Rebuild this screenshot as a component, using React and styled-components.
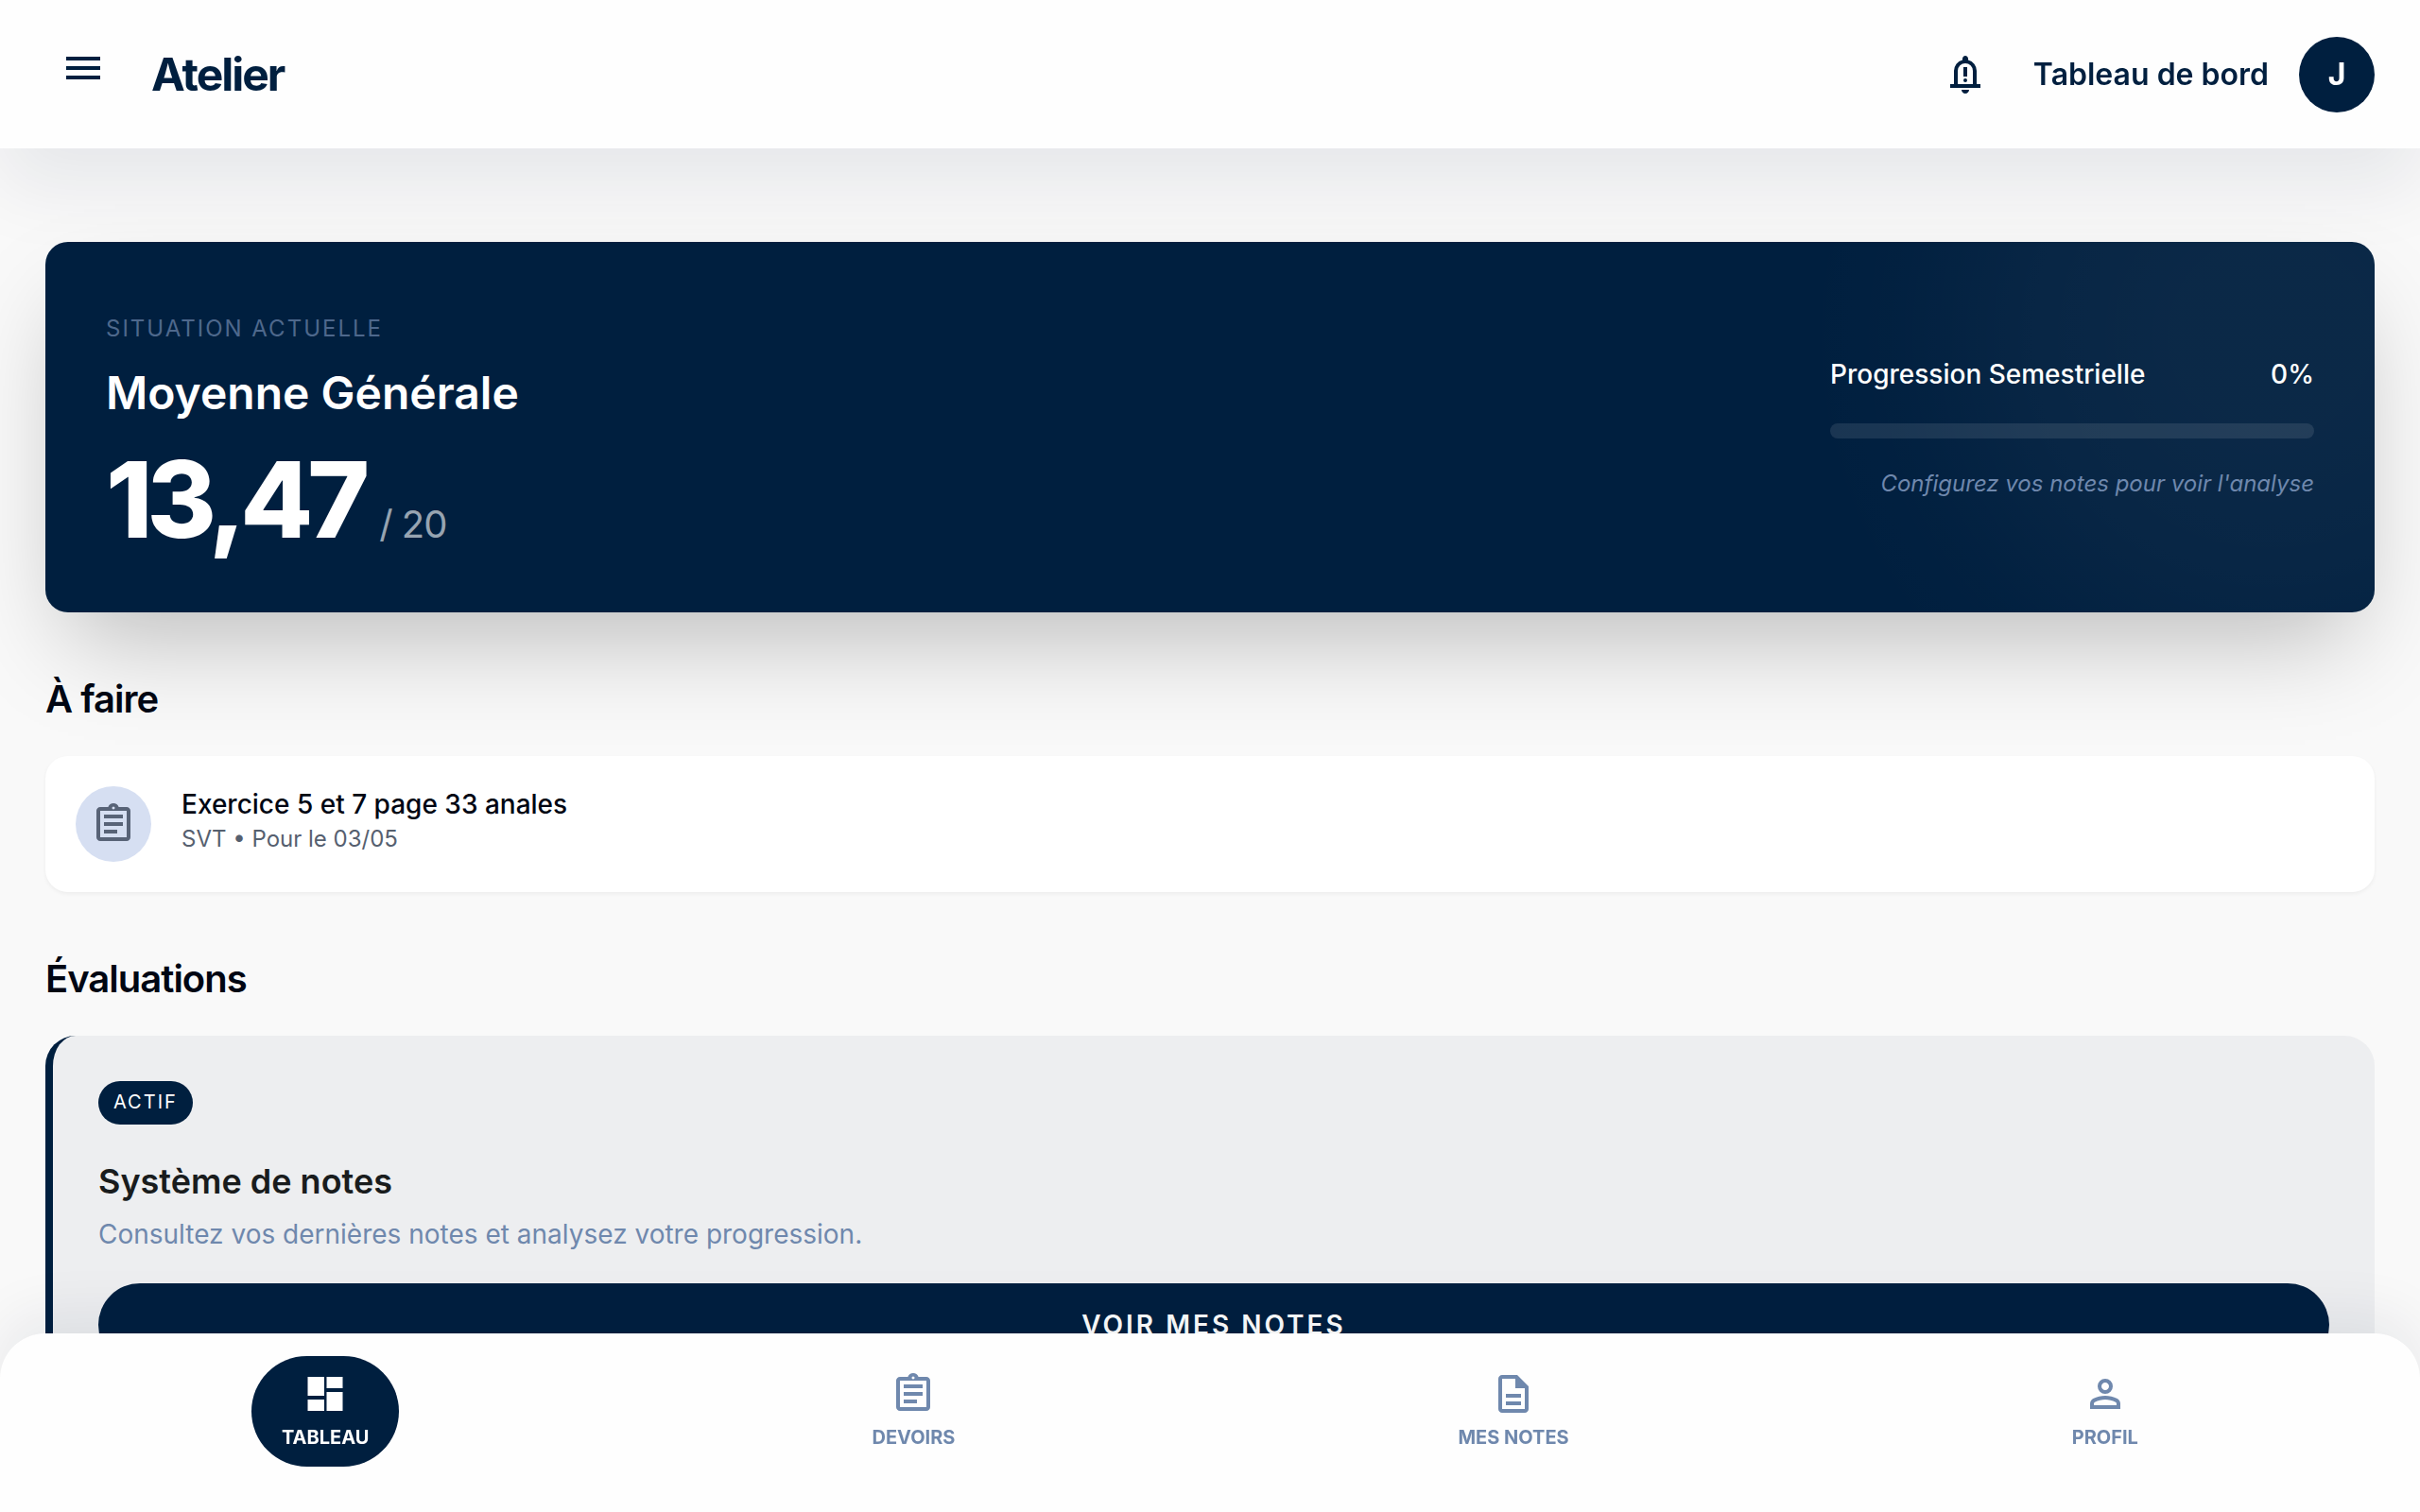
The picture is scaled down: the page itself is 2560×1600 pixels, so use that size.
import React from "react";
import styled, { createGlobalStyle } from "styled-components";

const NAVY = "#001f3f";
const STEEL = "#6f88ad";

const GlobalStyle = createGlobalStyle`
  * {
    box-sizing: border-box;
  }

  body {
    margin: 0;
    background: #f9f9f9;
    color: #191c1d;
    font-family: Inter, "Liberation Sans", sans-serif;
  }

  h1, h2, h3, p {
    margin: 0;
  }

  button {
    border: 0;
    font-family: inherit;
    cursor: pointer;
  }
`;

const ICONS = {
    menu: "M120-240v-80h720v80H120Zm0-200v-80h720v80H120Zm0-200v-80h720v80H120Z",
    bell: "M160-200v-80h80v-280q0-83 50-147.5T420-792v-28q0-25 17.5-42.5T480-880q25 0 42.5 17.5T540-820v28q80 20 130 84.5T720-560v280h80v80H160ZM480-80q-33 0-56.5-23.5T400-160h160q0 33-23.5 56.5T480-80ZM320-280h320v-280q0-66-47-113t-113-47q-66 0-113 47t-47 113v280ZM440-640h80v200h-80v-200ZM480-320a40 40 0 1 1 0-80a40 40 0 1 1 0 80Z",
    assignment: "M200-120q-33 0-56.5-23.5T120-200v-560q0-33 23.5-56.5T200-840h168q13-36 43.5-58t68.5-22q38 0 68.5 22t43.5 58h168q33 0 56.5 23.5T840-760v560q0 33-23.5 56.5T760-120H200Zm0-80h560v-560H200v560Zm80-80h280v-80H280v80Zm0-160h400v-80H280v80Zm0-160h400v-80H280v80Zm221.5-198.5Q510-807 510-820t-8.5-21.5Q493-850 480-850t-21.5 8.5Q450-833 450-820t8.5 21.5Q467-790 480-790t21.5-8.5Z",
    dashboard: "M510-600v-240h340v240H510ZM110-440v-400h350v400H110Zm400 320v-400h340v400H510Zm-400 0v-240h350v240H110Z",
    description: "M320-240h320v-80H320v80Zm0-160h320v-80H320v80ZM240-80q-33 0-56.5-23.5T160-160v-640q0-33 23.5-56.5T240-880h320l240 240v480q0 33-23.5 56.5T720-80H240Zm280-520v-200H240v640h480v-440H520Z",
    person: "M480-480q-66 0-113-47t-47-113q0-66 47-113t113-47q66 0 113 47t47 113q0 66-47 113t-113 47ZM160-160v-112q0-34 17.5-62.5T224-378q62-31 126-46.5T480-440q66 0 130 15.5T736-378q29 15 46.5 43.5T800-272v112H160Zm80-80h480v-32q0-11-5.5-20T700-306q-54-27-109-40.5T480-360q-56 0-111 13.5T260-306q-9 5-14.5 14t-5.5 20v32Zm240-320q33 0 56.5-23.5T560-640q0-33-23.5-56.5T480-720q-33 0-56.5 23.5T400-640q0 33 23.5 56.5T480-560Z",
};

const Svg = styled.svg`
  display: block;
  flex: none;
  width: 48px;
  height: 48px;
  fill: currentColor;
`;

const Icon = ({ name }) => (
    <Svg viewBox="0 -960 960 960" aria-hidden="true">
        <path fillRule="nonzero" d={ICONS[name]} />
    </Svg>
);

const TopBar = styled.header`
  position: fixed;
  inset: 0 0 auto;
  z-index: 10;
  display: flex;
  align-items: center;
  justify-content: space-between;
  padding: 32px 48px;
  background: #fefefe;
  box-shadow: 0 40px 80px rgba(0, 31, 63, 0.08);
  color: ${NAVY};
`;

const TopGroup = styled.div`
  display: flex;
  align-items: center;
  gap: 32px;
`;

const MenuButton = styled.button`
  padding: 16px 16px 29px;
  background: none;
  color: inherit;
`;

const BellButton = styled.button`
  margin-right: 16px;
  padding: 0;
  background: none;
  color: inherit;
`;

const Brand = styled.h1`
  font-size: 48px;
  line-height: 64px;
  font-weight: 700;
  letter-spacing: -2px;
`;

const PageName = styled.span`
  font-size: 32px;
  line-height: 48px;
  font-weight: 600;
`;

const Avatar = styled.div`
  display: flex;
  align-items: center;
  justify-content: center;
  width: 80px;
  height: 80px;
  border-radius: 50%;
  background: ${NAVY};
  color: #fff;
  font-size: 32px;
  line-height: 48px;
  font-weight: 700;
`;

const Main = styled.main`
  display: flex;
  flex-direction: column;
  gap: 64px;
  padding: 256px 48px 96px;
`;

const Hero = styled.section`
  display: flex;
  align-items: center;
  justify-content: space-between;
  padding: 64px;
  border-radius: 24px;
  background:
    radial-gradient(circle 500px at calc(100% - 110px) 100px, rgba(255, 255, 255, 0.045) 20%, rgba(255, 255, 255, 0.03) 50%, rgba(255, 255, 255, 0.008) 80%, transparent),
    ${NAVY};
  box-shadow: 0 50px 100px -24px rgba(0, 0, 0, 0.25);
  color: #fff;
`;

const Eyebrow = styled.p`
  padding: 10px 0 18px;
  color: ${STEEL};
  font-size: 24px;
  line-height: 36px;
  letter-spacing: 2px;
  opacity: 0.7;
`;

const HeroTitle = styled.h2`
  font-size: 48px;
  line-height: 64px;
  font-weight: 600;
`;

const Score = styled.p`
  display: flex;
  align-items: baseline;
  gap: 16px;
  margin-top: 24px;
  font-size: 112px;
  line-height: 112px;
  font-weight: 800;
  letter-spacing: -6px;
`;

const ScoreMax = styled.span`
  color: rgba(255, 255, 255, 0.6);
  font-size: 40px;
  line-height: 48px;
  font-weight: 400;
  letter-spacing: -1px;
`;

const Progress = styled.div`
  width: 512px;
`;

const ProgressHead = styled.div`
  display: flex;
  justify-content: space-between;
  font-size: 28px;
  line-height: 40px;
  font-weight: 500;
`;

const ProgressTrack = styled.div`
  height: 16px;
  margin: 32px 0;
  overflow: hidden;
  border-radius: 8px;
  background: rgba(255, 255, 255, 0.1);
`;

const ProgressFill = styled.div`
  height: 100%;
  background: #fff;
`;

const ProgressNote = styled.p`
  color: ${STEEL};
  font-size: 24px;
  line-height: 32px;
  font-style: italic;
  text-align: right;
`;

const Section = styled.section`
  display: flex;
  flex-direction: column;
  gap: 32px;
`;

const SectionTitle = styled.h2`
  color: #000613;
  font-size: 40px;
  line-height: 56px;
  font-weight: 600;
  letter-spacing: -1px;
`;

const Task = styled.article`
  display: flex;
  gap: 32px;
  padding: 32px;
  border-radius: 24px;
  background: #fff;
  box-shadow: 0 2px 4px rgba(0, 0, 0, 0.05);
`;

const TaskIcon = styled.div`
  display: flex;
  align-items: center;
  justify-content: center;
  width: 80px;
  height: 80px;
  border-radius: 50%;
  background: #d6dff2;
  color: #586377;
`;

const TaskTitle = styled.h3`
  color: #000613;
  font-size: 28px;
  line-height: 38px;
  font-weight: 500;
`;

const TaskMeta = styled.p`
  color: #56606f;
  font-size: 24px;
  line-height: 36px;
`;

const Evaluation = styled.article`
  padding: 48px;
  border-left: 8px solid ${NAVY};
  border-radius: 32px;
  background: #edeef0;
`;

const Badge = styled.span`
  display: block;
  width: fit-content;
  padding: 8px 16px 10px;
  border-radius: 24px;
  background: ${NAVY};
  color: #fff;
  font-size: 20px;
  line-height: 28px;
  letter-spacing: 2px;
`;

const EvaluationTitle = styled.h3`
  margin-top: 32px;
  font-size: 36px;
  line-height: 56px;
  font-weight: 600;
`;

const EvaluationText = styled.p`
  margin-top: 8px;
  color: ${STEEL};
  font-size: 28px;
  line-height: 40px;
`;

const WideButton = styled.button`
  display: block;
  width: 100%;
  margin-top: 32px;
  padding: 24px;
  border-radius: 44px;
  background: ${NAVY};
  color: #fff;
  font-size: 28px;
  line-height: 40px;
  font-weight: 600;
  letter-spacing: 3px;
`;

const BottomNav = styled.nav`
  position: fixed;
  inset: auto 0 0;
  z-index: 10;
  display: flex;
  justify-content: space-around;
  padding: 24px 32px 48px;
  border-radius: 48px 48px 0 0;
  background: #fefefe;
  box-shadow: 0 -20px 60px rgba(0, 31, 63, 0.07);
`;

const NavItem = styled.a`
  display: flex;
  flex-direction: column;
  align-items: center;
  gap: 8px;
  padding: 16px 32px;
  border-radius: 64px;
  background: ${({ $active }) => ($active ? NAVY : "transparent")};
  color: ${({ $active }) => ($active ? "#fff" : STEEL)};
  font-size: 20px;
  line-height: 29px;
  font-weight: 700;
  text-decoration: none;
`;

const NAV = [
    { icon: "dashboard", label: "TABLEAU", href: "#tableau" },
    { icon: "assignment", label: "DEVOIRS", href: "#devoirs" },
    { icon: "description", label: "MES NOTES", href: "#notes" },
    { icon: "person", label: "PROFIL", href: "#profil" },
];

const App = () => {
    const [current, setCurrent] = React.useState("TABLEAU");
    const progress = 0;

    return (
        <>
            <GlobalStyle />
            <TopBar>
                <TopGroup>
                    <MenuButton type="button" aria-label="Menu">
                        <Icon name="menu" />
                    </MenuButton>
                    <Brand>Atelier</Brand>
                </TopGroup>
                <TopGroup>
                    <BellButton type="button" aria-label="Notifications">
                        <Icon name="bell" />
                    </BellButton>
                    <PageName>Tableau de bord</PageName>
                    <Avatar>J</Avatar>
                </TopGroup>
            </TopBar>

            <Main>
                <Hero>
                    <div>
                        <Eyebrow>SITUATION ACTUELLE</Eyebrow>
                        <HeroTitle>Moyenne Générale</HeroTitle>
                        <Score>
                            13,47
                            <ScoreMax>/ 20</ScoreMax>
                        </Score>
                    </div>
                    <Progress>
                        <ProgressHead>
                            <span>Progression Semestrielle</span>
                            <span>{progress}%</span>
                        </ProgressHead>
                        <ProgressTrack>
                            <ProgressFill style={{ width: `${progress}%` }} />
                        </ProgressTrack>
                        <ProgressNote>Configurez vos notes pour voir l'analyse</ProgressNote>
                    </Progress>
                </Hero>

                <Section>
                    <SectionTitle>À faire</SectionTitle>
                    <Task>
                        <TaskIcon>
                            <Icon name="assignment" />
                        </TaskIcon>
                        <div>
                            <TaskTitle>Exercice 5 et 7 page 33 anales</TaskTitle>
                            <TaskMeta>SVT • Pour le 03/05</TaskMeta>
                        </div>
                    </Task>
                </Section>

                <Section>
                    <SectionTitle>Évaluations</SectionTitle>
                    <Evaluation>
                        <Badge>ACTIF</Badge>
                        <EvaluationTitle>Système de notes</EvaluationTitle>
                        <EvaluationText>Consultez vos dernières notes et analysez votre progression.</EvaluationText>
                        <WideButton type="button">VOIR MES NOTES</WideButton>
                    </Evaluation>
                </Section>
            </Main>

            <BottomNav>
                {NAV.map(({ icon, label, href }) => (
                    <NavItem key={label} href={href} $active={label === current} onClick={() => setCurrent(label)}>
                        <Icon name={icon} />
                        {label}
                    </NavItem>
                ))}
            </BottomNav>
        </>
    );
};

export default App;
